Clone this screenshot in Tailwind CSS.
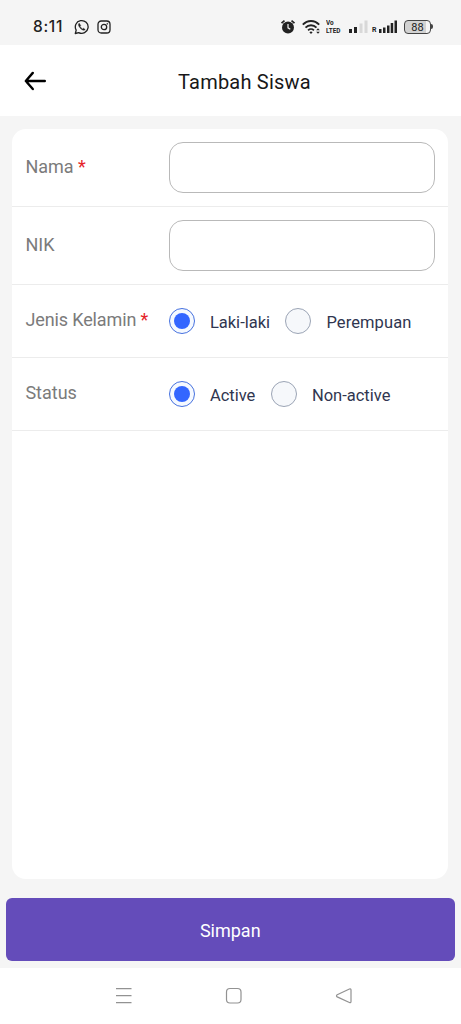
<!DOCTYPE html>
<html lang="id">
<head>
<meta charset="utf-8">
<meta name="viewport" content="width=device-width, initial-scale=1">
<title>Tambah Siswa</title>
<script src="https://cdn.jsdelivr.net/npm/@tailwindcss/browser@4"></script>
</head>
<body class="bg-[#f5f5f5] font-['Roboto',sans-serif]">
<div class="flex h-[1024px] w-[461px] flex-col overflow-hidden">
  <!-- Status bar -->
  <div class="flex h-[45px] shrink-0 items-center pt-2 pl-[33px] text-[#222]">
    <span class="w-[41px] font-['Inter',sans-serif] text-[15.500px] leading-5 font-medium tracking-[0.7px]">8:11</span>
    <svg class="h-4 w-4 shrink-0" viewBox="0 0 16 16" fill="none" stroke="currentColor">
      <path d="M1.300 14.500l.9-3.300A6.400 6.400 0 1 1 4.700 13.600z" stroke-width="1.300" stroke-linejoin="round"/>
      <path d="M5.200 4.300c-1.300.9-.7 2.800.9 4.600s3.700 3.100 5.100 1.700l-1.700-1.300-.9.700C7.500 9.500 6.600 8.600 6 7.400l.7-.9z" fill="currentColor" stroke-width=".5"/>
    </svg>
    <svg class="ml-[7px] h-[14px] w-[14px] shrink-0" viewBox="0 0 14 14" fill="none" stroke="currentColor" stroke-width="1.300">
      <rect x="1" y="1" width="12" height="12" rx="3.300"/><circle cx="7" cy="7" r="2.700"/><circle cx="10.300" cy="3.800" r=".5" fill="currentColor" stroke-width=".5"/>
    </svg>
    <svg class="ml-[169px] h-4 w-4 shrink-0" viewBox="0 0 16 16" fill="none">
      <circle cx="8" cy="8.500" r="6" fill="currentColor"/><path d="M1.500 4.200l3-2.500M14.500 4.200l-3-2.500" stroke="currentColor" stroke-width="1.700"/><path d="M8 5v3.800l2.300 1.400" stroke="#f5f5f5" stroke-width="1.200"/>
    </svg>
    <svg class="ml-[6px] h-4 w-5 shrink-0" viewBox="0 0 20 16" fill="none" stroke="currentColor" stroke-width="1.900">
      <path d="M.8 5.600C5.500.7 12.500.7 17.200 5.600M3.500 8.600c3.100-3.200 7.900-3.200 11 0M6.100 11.300c1.600-1.600 4.200-1.600 5.800 0"/>
      <path d="M9 14.900l-1.600-1.700q1.600-1.200 3.200 0z" fill="currentColor" stroke="none"/><path d="M14.200 11.300l1.800-2 1.800 2zM14.200 12.700l1.800 2 1.800-2z" fill="currentColor" stroke="none"/>
    </svg>
    <div class="ml-[4px] w-[22px] shrink-0 origin-left scale-x-80 font-['Roboto',sans-serif] text-[8px] leading-[8px] font-bold"><div>Vo</div><div>LTED</div></div>
    <svg class="h-4 w-5 shrink-0" viewBox="0 0 20 16" fill="currentColor">
      <path d="M1 10h3v4H1zM6 8h3v6H6z"/><path d="M11.500 4.500h3V14h-3zM16.500 1.500h3V14h-3z" fill="#d8d8d8"/>
    </svg>
    <span class="ml-[4px] h-4 w-[6px] shrink-0 pt-[7px] text-[7px] leading-[8px] font-bold">R</span>
    <svg class="h-4 w-5 shrink-0" viewBox="0 0 20 16" fill="currentColor">
      <path d="M1 10h2.500v4H1zM5 8.500h2.500V14H5zM9 6.500h2.500V14H9zM12.700 4h2.500v10h-2.500zM16.500 1.500H19V14h-2.500z"/>
    </svg>
    <div class="ml-[6px] flex h-[14px] w-[27px] shrink-0 items-center justify-center rounded-[4px] border border-[#444] bg-linear-to-r from-[#d2d2d2] from-85% to-[#f5f5f5] to-85% pt-px text-[11px] leading-none">88</div>
    <div class="h-[5px] w-[2px] rounded-r bg-[#444]"></div>
  </div>

  <!-- Header -->
  <header class="flex h-[71px] shrink-0 items-center bg-white pl-6">
    <svg class="h-[22px] w-[24px] shrink-0" viewBox="0 0 24 22" fill="none" stroke="#000" stroke-width="2.400" stroke-linecap="round" stroke-linejoin="round"><path d="M8.800 2.900L1.800 11l7 8M2 11h18.800"/></svg>
    <h1 class="ml-[130px] pt-[2px] text-[20px] leading-6 tracking-[0.22px] whitespace-nowrap text-[#181818]">Tambah Siswa</h1>
  </header>

  <!-- Form -->
  <main class="mt-[13px] ml-[12.4px] h-[750px] w-[436px] shrink-0 rounded-[14px] bg-white text-[18px] text-[#7b7b7b]">
    <div class="flex h-[78px] items-center border-b border-[#ececec] pl-[13px]">
      <label for="nama" class="w-[143.500px] pb-[2px]">Nama <span class="text-[#e52329]">*</span></label>
      <input id="nama" class="h-[51px] w-[266px] rounded-[14px] border border-[#b9b9b9] bg-white px-3">
    </div>
    <div class="flex h-[78px] items-center border-b border-[#ececec] pl-[13px]">
      <label for="nik" class="w-[143.500px] pb-[3px]">NIK</label>
      <input id="nik" class="h-[51px] w-[266px] rounded-[14px] border border-[#b9b9b9] bg-white px-3">
    </div>
    <div class="flex h-[73px] items-center border-b border-[#ececec] pl-[13px]">
      <span class="w-[143.500px] pb-[3px] tracking-[-0.12px] whitespace-nowrap">Jenis Kelamin <span class="text-[#e52329]">*</span></span>
      <span class="flex h-[26px] w-[26px] items-center justify-center rounded-full border border-[#4671df] bg-[#f5f9ff]"><span class="h-4 w-4 rounded-full bg-[#3366ff]"></span></span>
      <span class="ml-[15px] w-[75.500px] pt-[4px] text-[16.500px] text-[#303650]">Laki-laki</span>
      <span class="h-[26px] w-[26px] rounded-full border border-[#9ba4b5] bg-[#f6f8fb]"></span>
      <span class="ml-[15px] pt-[4px] text-[16.500px] tracking-[0.1px] text-[#303650]">Perempuan</span>
    </div>
    <div class="flex h-[73px] items-center border-b border-[#ececec] pl-[13px]">
      <span class="w-[143.500px] pb-[3px]">Status</span>
      <span class="flex h-[26px] w-[26px] items-center justify-center rounded-full border border-[#4671df] bg-[#f5f9ff]"><span class="h-4 w-4 rounded-full bg-[#3366ff]"></span></span>
      <span class="ml-[15px] w-[61px] pt-[4px] text-[16.500px] text-[#303650]">Active</span>
      <span class="h-[26px] w-[26px] rounded-full border border-[#9ba4b5] bg-[#f6f8fb]"></span>
      <span class="ml-[15px] pt-[4px] text-[16.500px] text-[#303650]">Non-active</span>
    </div>
  </main>

  <button class="mt-[19px] ml-[6px] h-[63px] w-[448.500px] shrink-0 rounded-[6px] bg-[#644cba] pt-[2px] text-[18px] text-white">Simpan</button>

  <!-- Navigation bar -->
  <nav class="mt-[7px] flex grow items-start bg-white pt-[19px] pl-[115px] text-[#929292]">
    <svg class="h-[18px] w-[18px]" viewBox="0 0 18 18" fill="none" stroke="currentColor" stroke-width="1.200"><path d="M1 1.700h15.500M1 8.700h15.500M1 15.700h15.500"/></svg>
    <svg class="ml-[92px] h-[18px] w-[18px]" viewBox="0 0 18 18" fill="none" stroke="currentColor" stroke-width="1.200"><rect x="1.500" y="1.500" width="14.500" height="14.500" rx="3.500"/></svg>
    <svg class="ml-[92px] h-[18px] w-[18px]" viewBox="0 0 18 18" fill="none" stroke="currentColor" stroke-width="1.200"><path d="M2.200 7.800L14.400 2q1.600-.6 1.600 1v11.500q0 1.600-1.600 1L2.200 9.900q-1.400-1 0-2.100z"/></svg>
  </nav>
</div>
</body>
</html>
